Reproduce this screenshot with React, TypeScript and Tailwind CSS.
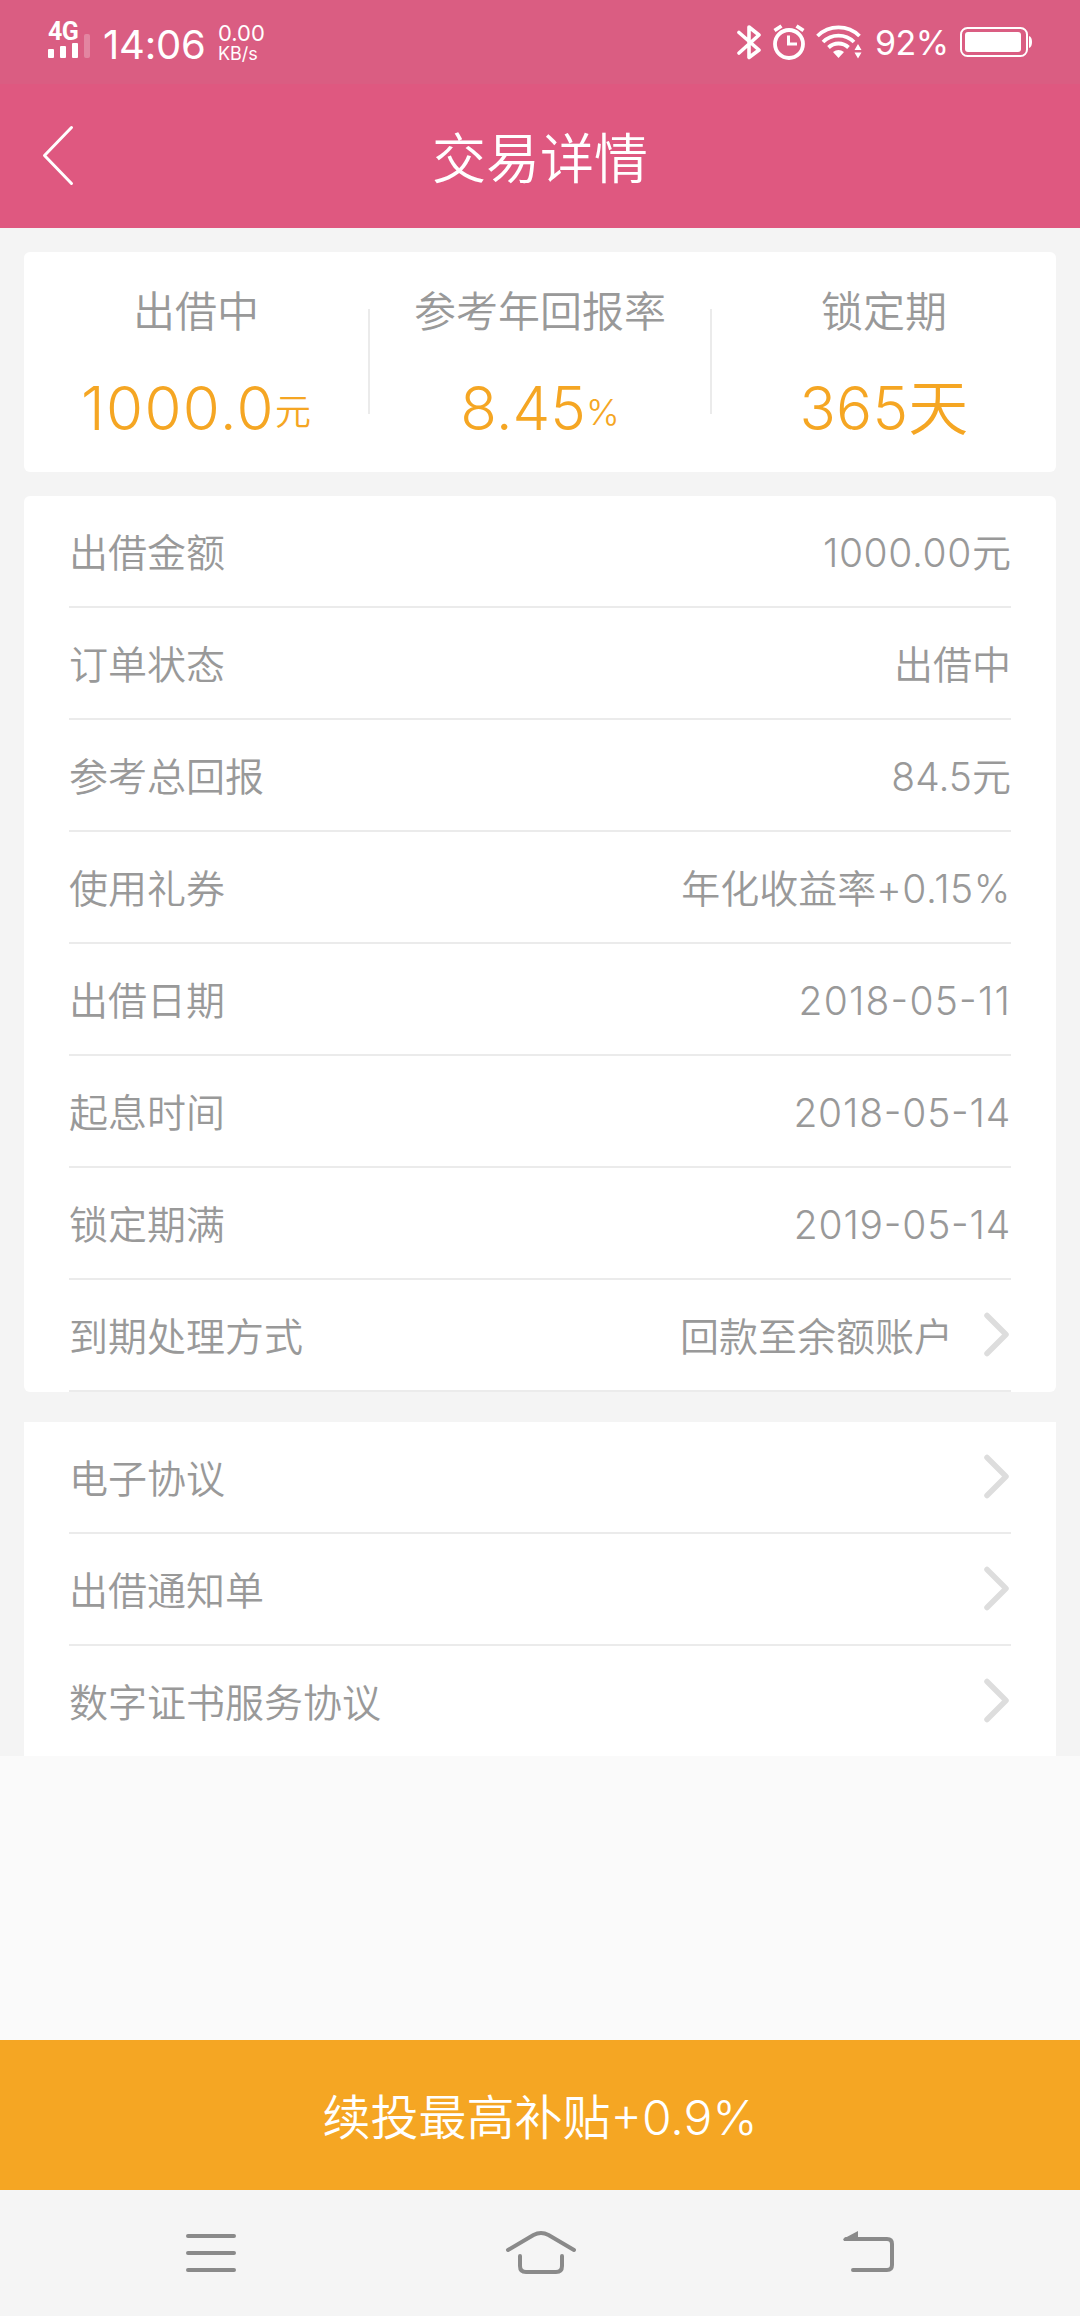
import clsx from 'clsx';

type Row = { label: string; value?: string; amount?: string; unit?: string; date?: string; link?: boolean };

const summary = [
    { label: '出借中', value: '1000.0', unit: '元', spacing: 'tracking-[1.4px]' },
    { label: '参考年回报率', value: '8.45', unit: '%', spacing: '' },
    { label: '锁定期', value: '365天', spacing: 'tracking-[0.3px]' },
];

const details: Row[] = [
    { label: '出借金额', amount: '1000.00', unit: '元' },
    { label: '订单状态', value: '出借中' },
    { label: '参考总回报', value: '84.5元' },
    { label: '使用礼券', value: '年化收益率', amount: '+0.15%' },
    { label: '出借日期', date: '2018-05-11' },
    { label: '起息时间', date: '2018-05-14' },
    { label: '锁定期满', date: '2019-05-14' },
    { label: '到期处理方式', value: '回款至余额账户', link: true },
];

const documents: Row[] = [
    { label: '电子协议', link: true },
    { label: '出借通知单', link: true },
    { label: '数字证书服务协议', link: true },
];

/* ─── Status bar ─── */
function StatusBar() {
    return (
        <div className="flex h-[84px] items-start justify-between bg-[#da5d82] pl-12 pr-[47px] text-white">
            <div className="flex">
                <div className="w-[42px] pt-[22px]">
                    <div className="font-['Roboto',sans-serif] text-[25px] font-bold leading-[20px] tracking-[-0.5px]">4G</div>
                    <div className="mt-[-8px] flex items-end gap-[6px]">
                        <span className="h-[9px] w-[6px] rounded-[1px] bg-white" />
                        <span className="h-3 w-[6px] rounded-[1px] bg-white" />
                        <span className="h-[15px] w-[6px] rounded-[1px] bg-white" />
                        <span className="h-6 w-[6px] rounded-[2px] bg-white/25" />
                    </div>
                </div>
                <div className="ml-[13px] mt-[25px] w-[104px] text-[40px] leading-[40px] tracking-[-0.2px]">14:06</div>
                <div className="ml-[11px] pt-[22px]">
                    <div className="text-[22px] leading-[22px]">0.00</div>
                    <div className="text-[18px] leading-[20px]">KB/s</div>
                </div>
            </div>
            <div className="mt-[24px] flex h-[36px] items-center">
                <svg className="h-9 w-[26px]" viewBox="0 0 26 36" fill="none" stroke="currentColor" strokeWidth="3.6" strokeLinejoin="round" strokeLinecap="round">
                    <path d="M3 8.500 L23 26 L13 33.500 V3 L23 11 L3 29" />
                </svg>
                <svg className="ml-[11px] h-9 w-[32px]" viewBox="0 0 32 36" fill="none" stroke="currentColor" strokeWidth="3.8">
                    <circle cx="16" cy="20" r="14" />
                    <path d="M15.500 11.500 V20 H24" strokeWidth="3" />
                    <path d="M1.500 6.500 L8.500 2 M23.500 2 L30.500 6.500" />
                </svg>
                <svg className="ml-[11px] h-9 w-[46px]" viewBox="0 0 46 36" fill="none" stroke="currentColor" strokeWidth="3.8">
                    <path d="M1.500 12 A30 30 0 0 1 43.500 12" />
                    <path d="M7 18 A22 22 0 0 1 38 18" />
                    <path d="M12.500 23.500 A14.500 14.500 0 0 1 32.500 23.500" />
                    <path d="M22.500 34 L17 28 Q22.500 24 28 28 Z" fill="currentColor" stroke="none" />
                    <path d="M38.500 26 L42 20 L45.500 26 Z M38.500 28.500 L42 34.500 L45.500 28.500 Z" fill="currentColor" stroke="none" />
                </svg>
                <span className="ml-[13px] w-[85px] pt-px text-[34px] leading-[36px] tracking-[-0.5px]">92%</span>
                <svg className="h-9 w-[73px]" viewBox="0 0 73 36" fill="none">
                    <rect x="1" y="4" width="66" height="28" rx="6.500" stroke="currentColor" strokeWidth="2" />
                    <rect x="5" y="8" width="56" height="20" rx="3" fill="currentColor" />
                    <path d="M69 12 Q72 13 72 18 Q72 23 69 24 Z" fill="currentColor" />
                </svg>
            </div>
        </div>
    );
}

/* ─── Detail rows ─── */
function Chevron() {
    return (
        <svg className="ml-[31px] h-[46px] w-[27px]" viewBox="0 0 27 46" fill="none" stroke="#dddddd" strokeWidth="5.500" strokeLinecap="round" strokeLinejoin="round">
            <path d="M3 3.500 L22 22.500 L3 41.500" />
        </svg>
    );
}

function DetailRow({ row, border }: { row: Row; border: boolean }) {
    return (
        <div className={clsx('flex items-center text-[39px]', border ? 'h-28 border-b-2 border-[#ebebeb]' : 'h-[110px]')}>
            <span className="pt-1">{row.label}</span>
            <span className="ml-auto pt-[5px]">
                {row.value}
                {row.amount && <span className="tracking-[0.6px]">{row.amount}</span>}
                {row.unit}
                {row.date && (
                    <span
                        className={clsx(
                            "[font-feature-settings:'case']",
                            row.date.endsWith('11') ? 'tracking-[1.2px]' : 'tracking-[0.8px]'
                        )}
                    >
                        {row.date}
                    </span>
                )}
            </span>
            {row.link && <Chevron />}
        </div>
    );
}

export default function App() {
    return (
        <div className="flex h-[2316px] w-[1080px] flex-col bg-[#fafafa] font-['Inter','Noto_Sans_CJK_SC',sans-serif] text-[#999999]">
            <StatusBar />
            <header className="relative flex h-36 items-center justify-center bg-[#df5880] text-white">
                <svg className="absolute left-10 top-10 h-[64px] w-9" viewBox="0 0 36 64" fill="none" stroke="currentColor" strokeWidth="3" strokeLinecap="round" strokeLinejoin="round">
                    <path d="M31.500 3.500 L4.500 31.500 L31.500 59.500" />
                </svg>
                <h1 className="pt-[6px] text-[54px] font-[350]">交易详情</h1>
            </header>

            <main className="bg-[#f4f4f4] px-6 pt-6 font-[350]">
                <section className="grid h-[220px] grid-cols-[346px_342px_344px] rounded-md bg-white">
                    {summary.map((item, i) => (
                        <div key={item.label} className="flex">
                            <div className="flex-1 pt-[35px] text-center">
                                <div className="text-[42px] leading-[50px]">{item.label}</div>
                                <div className="mt-[35px] h-[72px] text-[60px] leading-[72px] text-[#f5a623]">
                                    <span className={item.spacing}>{item.value}</span>
                                    {item.unit && <span className="align-[5px] text-[36px] leading-none">{item.unit}</span>}
                                </div>
                            </div>
                            {i < summary.length - 1 && <div className="mt-[57px] h-[105px] w-[2px] bg-[#ebebeb]" />}
                        </div>
                    ))}
                </section>

                <section className="mt-6 rounded-md bg-white px-[45px]">
                    {details.map((row) => <DetailRow key={row.label} row={row} border />)}
                </section>

                <section className="mt-[30px] bg-white px-[45px]">
                    {documents.map((row, i) => (
                        <DetailRow key={row.label} row={row} border={i < documents.length - 1} />
                    ))}
                </section>
            </main>

            <button className="mt-auto h-[150px] bg-[#f5a623] pt-[5px] text-[48px] font-[350] text-white">续投最高补贴+0.9%</button>

            {/* System navigation */}
            <nav className="flex h-[126px] items-center justify-between bg-[#f5f5f5] pl-[186px] pr-[184px] text-[#8a8a8a]">
                <svg className="h-[46px] w-[50px]" viewBox="0 0 50 46" stroke="currentColor" strokeWidth="4" strokeLinecap="round">
                    <path d="M2 6 H48 M2 23 H48 M2 40 H48" />
                </svg>
                <svg className="h-[46px] w-[74px]" viewBox="0 0 74 46" fill="none" stroke="currentColor" strokeWidth="4" strokeLinecap="round" strokeLinejoin="round">
                    <path d="M5 20 L30.500 5 Q38 1 45.500 5 L71 20" />
                    <path d="M17 26 V36 Q17 42 23 42 H53 Q59 42 59 36 V26" />
                </svg>
                <svg className="h-[46px] w-[53px]" viewBox="0 0 53 46" fill="none" stroke="currentColor" strokeWidth="4" strokeLinecap="round" strokeLinejoin="round">
                    <path d="M3 9 H44 Q49 9 49 14 V35 Q49 40 44 40 H10" />
                    <path d="M0 9 L15 1 V11 H1 Z" fill="currentColor" stroke="none" />
                </svg>
            </nav>
        </div>
    );
}
